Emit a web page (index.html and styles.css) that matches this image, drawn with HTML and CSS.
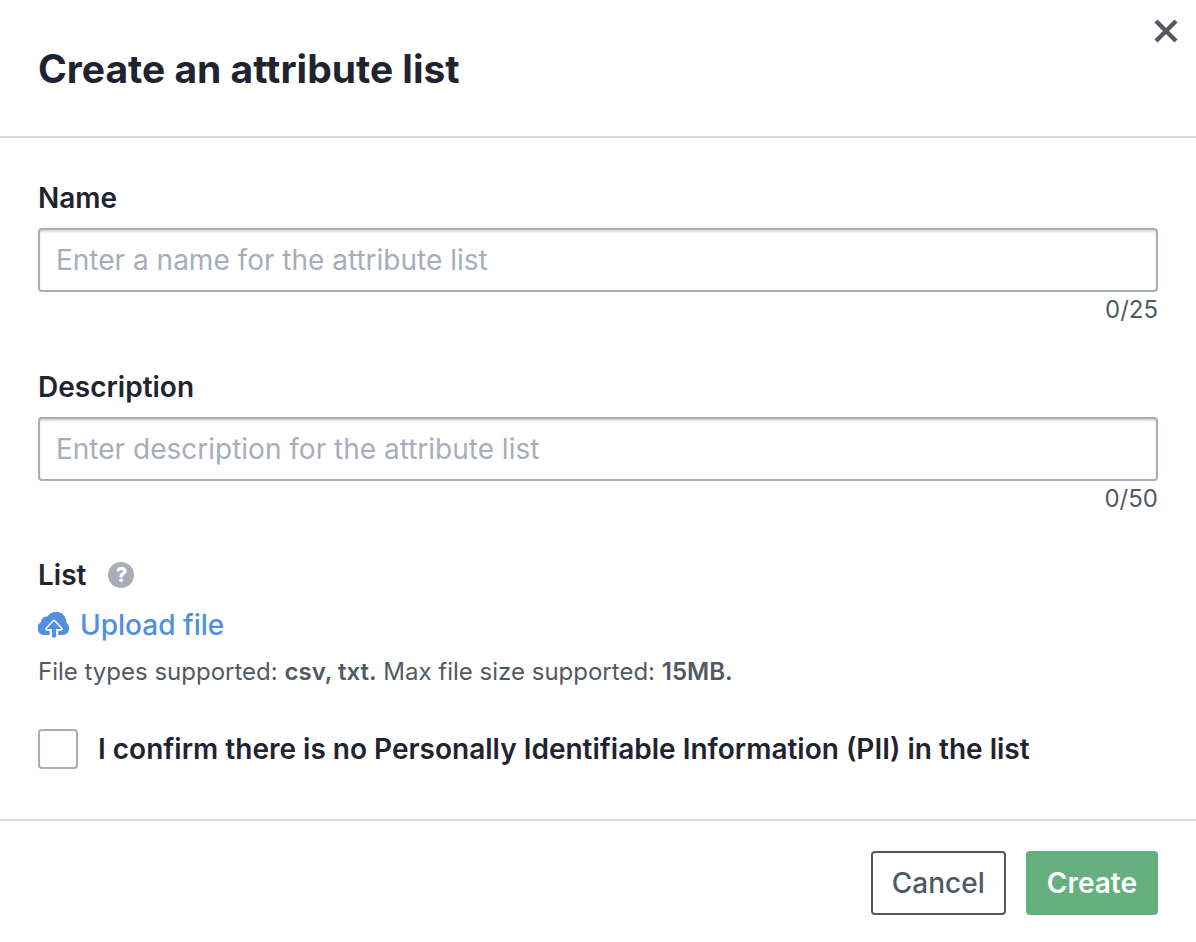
FILE: index.html
```html
<!DOCTYPE html>
<html lang="en">
<head>
<meta charset="utf-8">
<title>Create an attribute list</title>
<link rel="stylesheet" href="styles.css">
</head>
<body>
<form class="dialog" role="dialog" aria-labelledby="dialog-title">
  <header class="dialog-header">
    <h1 class="dialog-title" id="dialog-title">Create an attribute list</h1>
    <button class="close" type="button" aria-label="Close">
      <svg viewBox="0 0 24 24" width="24" height="24" aria-hidden="true"><path d="M2 2l20 20M22 2L2 22" fill="none" stroke="currentColor" stroke-width="4.400"/></svg>
    </button>
  </header>
  <div class="dialog-body">
    <div class="field">
      <label class="label" for="name">Name</label>
      <input class="input" id="name" type="text" maxlength="25" placeholder="Enter a name for the attribute list">
      <span class="counter">0/25</span>
    </div>
    <div class="field">
      <label class="label" for="description">Description</label>
      <input class="input" id="description" type="text" maxlength="50" placeholder="Enter description for the attribute list">
      <span class="counter">0/50</span>
    </div>
    <div class="list-heading">
      <span class="list-title">List</span>
      <button class="help" type="button" aria-label="Help">?</button>
    </div>
    <a class="upload" href="#">
      <svg viewBox="0 0 32 26" width="32" height="26" aria-hidden="true">
        <path d="M7 23A7 7 0 0 1 3 10 5.800 5.800 0 0 1 9.500 4.500 10.200 10.200 0 0 1 28.300 10.500 7 7 0 0 1 25.500 23z" fill="currentColor"/>
        <path d="M16 9.500l7 7.500h-4.500V27h-5v-10H9z" fill="none" stroke="#fff" stroke-width="3.600" stroke-linejoin="round"/>
        <path d="M16 9l7.500 8h-5.500v7.500a1 1 0 0 1-1 1h-2a1 1 0 0 1-1-1V17H8.500z" fill="currentColor"/>
      </svg>
      <span>Upload file</span>
    </a>
    <p class="hint">File types supported: <b>csv, txt.</b> Max file size supported: <b>15MB.</b></p>
    <div class="confirm">
      <input class="checkbox" type="checkbox" id="confirm">
      <label class="confirm-label" for="confirm">I confirm there is no Personally Identifiable Information (PII) in the list</label>
    </div>
  </div>
  <footer class="dialog-footer">
    <button class="button" type="button">Cancel</button>
    <button class="button primary" type="submit">Create</button>
  </footer>
</form>
</body>
</html>
```
FILE: styles.css
```css
* { box-sizing: border-box; }
body { margin: 0; background: #fff; color: #1f2430; font-family: Inter, "Liberation Sans", sans-serif; }
button, input { font-family: inherit; }
.dialog-header { display: flex; justify-content: space-between; align-items: flex-start; padding: 19px 18px 43px 38px; border-bottom: 2px solid #dadde2; }
.dialog-title { margin: 26px 0 0; font-size: 39px; line-height: 48px; font-weight: 700; }
.close { display: flex; padding: 0; border: 0; background: none; color: #505a64; }
.dialog-body { padding: 42px 38px 50px; }
.field { display: flex; flex-direction: column; margin-bottom: 44px; }
.label { font-size: 28px; line-height: 36px; font-weight: 600; }
.input { width: 100%; height: 64px; margin-top: 12px; padding: 0 16px; border: 2px solid #a6aeba; border-radius: 4px; font-size: 28px; color: #1f2430; background: #fff; box-shadow: inset 0 2px 2px #dcdcdc; }
.input::placeholder { color: #a6aeba; opacity: 1; }
.counter { margin-top: 3px; align-self: flex-end; font-size: 24px; line-height: 30px; color: #505a64; }
.list-heading { display: flex; align-items: center; gap: 22px; }
.list-title { font-size: 28px; line-height: 34px; font-weight: 600; }
.help { width: 26px; height: 26px; padding: 0; border: 0; border-radius: 50%; background: #a6aeba; color: #fff; font-size: 20px; line-height: 26px; font-weight: 800; }
.upload { display: inline-flex; align-items: center; gap: 10px; margin-top: 15px; color: #5090df; font-size: 28px; line-height: 36px; font-weight: 500; text-decoration: none; }
.hint { margin: 14px 0 0; font-size: 24px; line-height: 30px; color: #505a64; }
.hint b { font-weight: 600; }
.confirm { display: flex; align-items: center; gap: 20px; margin-top: 42px; }
.checkbox { appearance: none; flex: none; width: 40px; height: 40px; margin: 0; border: 2px solid #a6aeba; border-radius: 4px; background: #fff; }
.confirm-label { font-size: 28px; line-height: 36px; font-weight: 600; }
.dialog-footer { display: flex; justify-content: flex-end; gap: 20px; padding: 30px 38px 27px; border-top: 2px solid #dadde2; }
.button { height: 64px; padding: 0 19px; border: 2px solid #505a64; border-radius: 4px; background: #fff; color: #505a64; font-size: 28px; font-weight: 500; }
.primary { border-color: #66af7f; background: #66af7f; color: #fff; font-weight: 600; }
```
